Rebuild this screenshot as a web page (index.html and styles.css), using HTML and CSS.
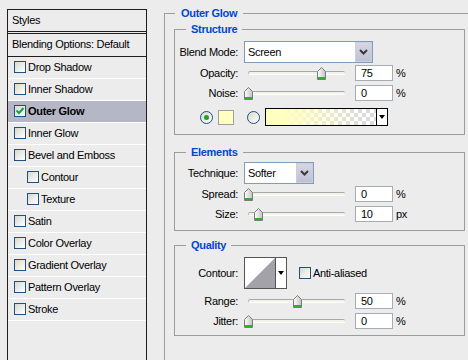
FILE: index.html
```html
<!DOCTYPE html>
<html lang="en">
<head>
    <meta charset="UTF-8">
    <title>Layer Style - Outer Glow</title>
    <link rel="stylesheet" href="styles.css">
</head>
<body>
    <!-- shared drawings -->
    <svg class="defs" width="0" height="0">
        <defs>
            <linearGradient id="thumbfill" x1="0" x2="1" y1="0" y2="0">
                <stop offset="0" stop-color="#ffffff"/>
                <stop offset="1" stop-color="#c2c2c2"/>
            </linearGradient>
            <symbol id="thumb" viewBox="0 0 9 13">
                <path d="M4.5 0.5 L8.5 4.5 V12.5 H0.5 V4.5 Z" fill="url(#thumbfill)" stroke="#7b7b7b"/>
                <rect x="1" y="10" width="7" height="2" fill="#2fae2f"/>
            </symbol>
            <symbol id="chevron" viewBox="0 0 9 6">
                <path d="M1 1 L4.5 4.5 L8 1" fill="none" stroke="#3a3a3a" stroke-width="2"/>
            </symbol>
        </defs>
    </svg>

    <div class="page">
        <!-- Lista de estilos -->
        <div class="styles-panel">
            <div class="styles-head">Styles</div>
            <div class="blend-opts">Blending Options: Default</div>
            <ul class="effects">
                <li><span class="check"></span>Drop Shadow</li>
                <li><span class="check"></span>Inner Shadow</li>
                <li class="active"><span class="check">
                    <svg width="10" height="10" viewBox="0 0 10 10"><path d="M1.5 4.5 L4 7 L8.5 2" fill="none" stroke="#21a121" stroke-width="2"/></svg>
                </span>Outer Glow</li>
                <li><span class="check"></span>Inner Glow</li>
                <li><span class="check"></span>Bevel and Emboss</li>
                <li class="sub"><span class="check"></span>Contour</li>
                <li class="sub"><span class="check"></span>Texture</li>
                <li><span class="check"></span>Satin</li>
                <li><span class="check"></span>Color Overlay</li>
                <li><span class="check"></span>Gradient Overlay</li>
                <li><span class="check"></span>Pattern Overlay</li>
                <li><span class="check"></span>Stroke</li>
            </ul>
        </div>

        <!-- Opções do Outer Glow -->
        <fieldset class="group outer">
            <legend>Outer Glow</legend>

            <fieldset class="group structure">
                <legend>Structure</legend>
                <div class="row tall">
                    <span class="lbl">Blend Mode:</span>
                    <div class="select blend"><span class="val">Screen</span><span class="drop"><svg width="9" height="6"><use href="#chevron"/></svg></span></div>
                </div>
                <div class="row">
                    <span class="lbl">Opacity:</span>
                    <div class="slider"><div class="track"></div><svg class="thumb" style="left:73px"><use href="#thumb"/></svg></div>
                    <div class="num">75</div><span class="unit">%</span>
                </div>
                <div class="row">
                    <span class="lbl">Noise:</span>
                    <div class="slider"><div class="track"></div><svg class="thumb" style="left:0px"><use href="#thumb"/></svg></div>
                    <div class="num">0</div><span class="unit">%</span>
                </div>
                <div class="row colors">
                    <span class="radio on"></span>
                    <span class="swatch"></span>
                    <span class="radio"></span>
                    <div class="gradient"><span class="fill"></span><span class="arrow"></span></div>
                </div>
            </fieldset>

            <fieldset class="group elements">
                <legend>Elements</legend>
                <div class="row tall">
                    <span class="lbl">Technique:</span>
                    <div class="select technique"><span class="val">Softer</span><span class="drop"><svg width="9" height="6"><use href="#chevron"/></svg></span></div>
                </div>
                <div class="row">
                    <span class="lbl">Spread:</span>
                    <div class="slider"><div class="track"></div><svg class="thumb" style="left:0px"><use href="#thumb"/></svg></div>
                    <div class="num">0</div><span class="unit">%</span>
                </div>
                <div class="row">
                    <span class="lbl">Size:</span>
                    <div class="slider"><div class="track"></div><svg class="thumb" style="left:10px"><use href="#thumb"/></svg></div>
                    <div class="num">10</div><span class="unit">px</span>
                </div>
            </fieldset>

            <fieldset class="group quality">
                <legend>Quality</legend>
                <div class="row contour-row">
                    <span class="lbl">Contour:</span>
                    <div class="contour">
                        <svg class="curve" width="30" height="30" viewBox="0 0 30 30"><rect width="30" height="30" fill="#fff"/><polygon points="0,30 30,0 30,30" fill="#a3a2a8"/></svg>
                        <span class="arrow"></span>
                    </div>
                    <span class="check"></span><span class="aa">Anti-aliased</span>
                </div>
                <div class="row">
                    <span class="lbl">Range:</span>
                    <div class="slider"><div class="track"></div><svg class="thumb" style="left:49px"><use href="#thumb"/></svg></div>
                    <div class="num">50</div><span class="unit">%</span>
                </div>
                <div class="row">
                    <span class="lbl">Jitter:</span>
                    <div class="slider"><div class="track"></div><svg class="thumb" style="left:0px"><use href="#thumb"/></svg></div>
                    <div class="num">0</div><span class="unit">%</span>
                </div>
            </fieldset>
        </fieldset>
    </div>
</body>
</html>
```

FILE: styles.css
```css
/* Geral */
* {
    box-sizing: border-box;
}
html, body {
    margin: 0;
    padding: 0;
    width: 468px;
    height: 360px;
    overflow: hidden;
    background-color: #ececec;
    font-family: "Liberation Sans", Arial, sans-serif;
    font-size: 11px;
    letter-spacing: -0.3px;
    color: #000;
}
.defs {
    position: absolute;
    width: 0;
    height: 0;
}
.page {
    display: flex;
    align-items: flex-start;
}

/* Painel de estilos */
.styles-panel {
    margin: 9px 0 0 7px;
    width: 140px;
    height: 400px;
    border: 1px solid #1e1e1e;
    border-bottom: none;
    flex-shrink: 0;
}
.styles-head {
    height: 24px;
    line-height: 20px;
    padding-left: 4px;
    border-bottom: 3px double #1e1e1e;
}
.blend-opts {
    height: 23px;
    line-height: 21px;
    padding-left: 4px;
    border-bottom: 1px solid #1e1e1e;
}
.effects {
    list-style: none;
    margin: 0;
    padding: 0;
}
.effects li {
    height: 22px;
    display: flex;
    align-items: center;
    padding-left: 6px;
    padding-bottom: 2px;
    border-bottom: 1px solid #ffffff;
}
.effects li.sub {
    padding-left: 19px;
}
.effects li.active {
    background-color: #b6b7c6;
    font-weight: bold;
}
.check {
    width: 12px;
    height: 12px;
    margin-right: 2px;
    border: 1px solid #1c5180;
    background: linear-gradient(135deg, #d8d8d0, #ffffff);
    display: flex;
    align-items: center;
    justify-content: center;
    flex-shrink: 0;
}

/* Grupos */
fieldset.group {
    margin: 0;
    padding: 0;
    min-width: 0;
    border: 1px solid #9c9c9c;
}
fieldset.group legend {
    padding: 0 5px;
    margin-left: 11px;
    line-height: 13px;
    font-weight: bold;
    color: #0046d5;
}
fieldset.outer {
    margin: 7px 0 0 17px;
    width: 330px;
    height: 400px;
    padding: 3px 0 0 9px;
    border-right: none;
    border-bottom: none;
    flex-shrink: 0;
}
fieldset.outer > legend {
    margin-left: 1px;
    padding: 0 6px;
}
.structure {
    width: 291px;
    padding: 5px 0 7px 0 !important;
}
.elements {
    width: 291px;
    margin-top: 11px !important;
    padding: 3px 0 6px 0 !important;
}
.quality {
    width: 291px;
    margin-top: 8px !important;
    padding: 5px 0 4px 0 !important;
}

/* Linhas */
.row {
    display: flex;
    align-items: center;
    height: 20px;
}
.row.tall {
    height: 22px;
}
.lbl {
    width: 63px;
    margin-right: 6px;
    text-align: right;
    white-space: nowrap;
}
.select {
    height: 22px;
    border: 1px solid #7f9db9;
    background-color: #fff;
    display: flex;
}
.select.blend {
    width: 129px;
}
.select.technique {
    width: 70px;
}
.select .val {
    flex: 1;
    line-height: 20px;
    padding-left: 3px;
}
.select .drop {
    width: 17px;
    background: linear-gradient(#d6d7e4, #bfc0d3);
    border: 1px solid #c9cfe0;
    display: flex;
    align-items: center;
    justify-content: center;
}

/* Slider */
.slider {
    position: relative;
    width: 111px;
    height: 13px;
    display: flex;
    align-items: center;
}
.track {
    margin-left: 4px;
    width: 97px;
    height: 4px;
    border-top: 1px solid #a8a8a8;
    border-left: 1px solid #b8b8b8;
    border-bottom: 1px solid #ffffff;
    border-radius: 2px;
    background-color: #f3f3ea;
}
.thumb {
    position: absolute;
    top: 0;
    width: 9px;
    height: 13px;
}
.num {
    width: 38px;
    height: 16px;
    line-height: 14px;
    padding-left: 5px;
    border: 1px solid #a5acb2;
    background-color: #fff;
}
.unit {
    margin-left: 3px;
}

/* Cores */
.colors {
    margin-top: 4px;
    padding-left: 25px;
}
.radio {
    width: 13px;
    height: 13px;
    border-radius: 50%;
    border: 1px solid #1c5180;
    background: linear-gradient(135deg, #d8d8d0, #ffffff);
    display: flex;
    align-items: center;
    justify-content: center;
}
.radio.on::after {
    content: "";
    width: 5px;
    height: 5px;
    border-radius: 50%;
    background-color: #21a121;
}
.swatch {
    width: 16px;
    height: 15px;
    margin: 0 13px 0 5px;
    background-color: #ffffc0;
    border: 1px solid #a0a0a0;
}
.gradient {
    width: 123px;
    height: 18px;
    margin-left: 5px;
    border: 1px solid #000;
    display: flex;
}
.gradient .fill {
    flex: 1;
    background:
        linear-gradient(90deg, #ffffc0 0%, #ffffc0 15%, rgba(255, 255, 192, 0) 85%),
        repeating-conic-gradient(#dcdcdc 0 25%, #ffffff 0 50%) 0 0 / 8px 8px;
}
.arrow {
    width: 11px;
    border-left: 1px solid #000;
    background-color: #fff;
    display: flex;
    align-items: center;
    justify-content: center;
}
.arrow::after {
    content: "";
    border-left: 3px solid transparent;
    border-right: 3px solid transparent;
    border-top: 4px solid #000;
}

/* Qualidade */
.contour-row {
    height: 32px;
    margin-bottom: 2px;
}
.contour {
    width: 43px;
    height: 32px;
    border: 1px solid #555;
    display: flex;
    margin-right: 12px;
}
.contour .curve {
    display: block;
}
.contour .arrow {
    border-left: 1px solid #555;
}
.aa {
    margin-left: 0;
}
```
